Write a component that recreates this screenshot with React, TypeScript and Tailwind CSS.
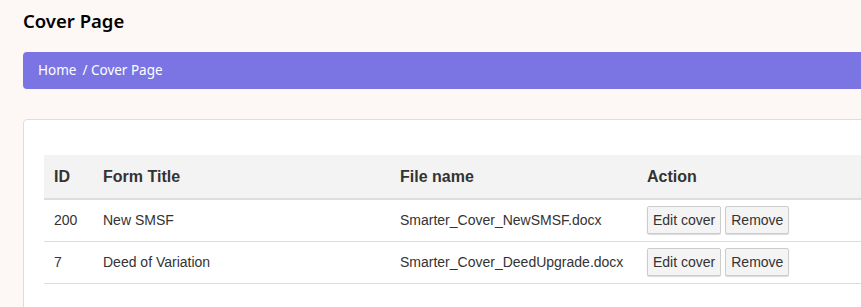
export default function App() {
  const rows = [
    { id: 200, title: "New SMSF", file: "Smarter_Cover_NewSMSF.docx" },
    { id: 7, title: "Deed of Variation", file: "Smarter_Cover_DeedUpgrade.docx" },
  ];

  return (
    <div className="min-h-[307px] w-[861px] overflow-hidden bg-[#fdf8f5] pl-[23px]">
      <h1 className="pt-[9px] font-['Noto_Sans',sans-serif] text-[18.5px] font-semibold leading-[24px] text-black">
        Cover Page
      </h1>

      <div className="mt-[19px] flex h-[37px] w-[900px] items-center rounded-l-[4px] bg-[#7a75e3] pl-[15px] font-['Noto_Sans',sans-serif] text-[13.5px] text-white">
        <span>Home</span>
        <span className="ml-[6px]">/ Cover Page</span>
      </div>

      <div className="mt-[30px] w-[900px] rounded-[4px] border border-[#dddddd] bg-white px-[20px] pt-[35px] pb-[30px]">
        <table className="w-[900px] border-collapse font-['Liberation_Sans',Arial,sans-serif] text-[14px] text-[#333]">
          <thead>
            <tr className="h-[44px] border-b-2 border-[#dddddd] bg-[#f3f3f3] text-left text-[16px]">
              <th className="w-[49px] pl-[10px] font-bold">ID</th>
              <th className="w-[297px] pl-[10px] font-bold">Form Title</th>
              <th className="w-[247px] pl-[10px] font-bold">File name</th>
              <th className="pl-[10px] font-bold">Action</th>
            </tr>
          </thead>
          <tbody>
            {rows.map((r) => (
              <tr key={r.id} className="h-[42px] border-b border-[#dddddd]">
                <td className="pl-[10px]">{r.id}</td>
                <td className="pl-[10px]">{r.title}</td>
                <td className="pl-[10px]">{r.file}</td>
                <td className="pl-[10px]">
                  <div className="flex gap-[4px]">
                    <button className="h-[28px] rounded-[2px] border border-[#cccccc] bg-[#f4f4f4] px-[5px] text-[14px] text-[#333] shadow-[0_1px_1px_rgba(0,0,0,0.15)]">
                      Edit cover
                    </button>
                    <button className="h-[28px] rounded-[2px] border border-[#cccccc] bg-[#f4f4f4] px-[5px] text-[14px] text-[#333] shadow-[0_1px_1px_rgba(0,0,0,0.15)]">
                      Remove
                    </button>
                  </div>
                </td>
              </tr>
            ))}
          </tbody>
        </table>
      </div>
    </div>
  );
}
